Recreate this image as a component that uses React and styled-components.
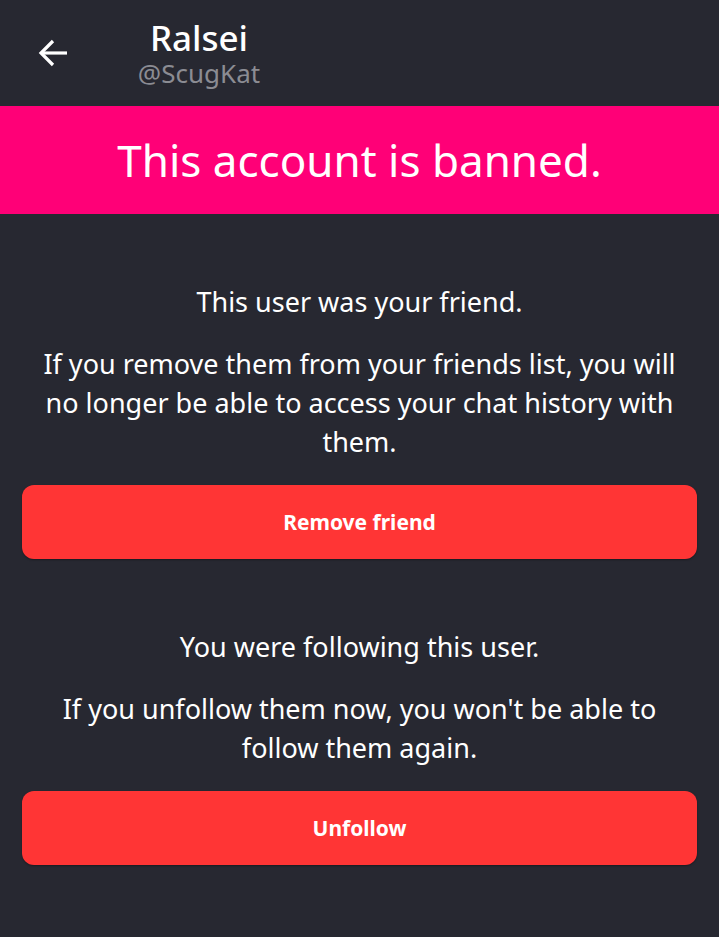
import React from "react";
import styled, { createGlobalStyle } from "styled-components";

const GlobalStyle = createGlobalStyle`
  html, body {
    margin: 0;
    padding: 0;
    background: #272831;
  }
  body {
    font-family: "Noto Sans", "Open Sans", sans-serif;
    color: #ffffff;
  }
`;

const Page = styled.div`
  min-height: 937px;
  background: #272831;
`;

const Header = styled.header`
  height: 106px;
  display: flex;
  align-items: flex-start;
  padding: 21px 0 0 36px;
  box-sizing: border-box;
`;

const BackButton = styled.button`
  background: none;
  border: none;
  padding: 0;
  margin-top: 15px;
  width: 34px;
  height: 34px;
  display: flex;
  align-items: center;
  justify-content: center;
  color: #ffffff;
`;

const Titles = styled.div`
  width: 130px;
  margin-left: 64px;
  display: flex;
  flex-direction: column;
  align-items: center;
`;

const Name = styled.h1`
  margin: 0;
  font-size: 35px;
  font-weight: 500;
  line-height: 34px;
`;

const Handle = styled.span`
  margin-top: 4px;
  font-size: 26px;
  color: #8b8c93;
  line-height: 28px;
`;

const Banner = styled.div`
  height: 108px;
  background: #ff0077;
  display: flex;
  align-items: center;
  justify-content: center;
  font-size: 44px;
  font-weight: 400;
`;

const Content = styled.main`
  padding: 68px 22px 0;
  display: flex;
  flex-direction: column;
`;

const Section = styled.section`
  display: flex;
  flex-direction: column;
  margin-bottom: ${(p) => p.$gap || 0}px;
`;

const Lead = styled.p`
  margin: 0 0 23px;
  text-align: center;
  font-size: 27px;
  line-height: 39px;
`;

const Body = styled.p`
  margin: 0 0 24px;
  padding: 0 16px;
  text-align: center;
  font-size: 27px;
  line-height: 39px;
`;

const DangerButton = styled.button`
  height: 74px;
  border: none;
  border-radius: 12px;
  background: #ff3535;
  color: #ffffff;
  font-family: "Noto Sans", "Open Sans", sans-serif;
  font-size: 21px;
  font-weight: 700;
  box-shadow: 0 1px 2px rgba(0, 0, 0, 0.35);
`;

function ArrowLeft() {
  return (
    <svg width="32" height="30" viewBox="0 0 32 30" fill="none" stroke="currentColor" strokeWidth="3.2" strokeLinecap="butt">
      <path d="M30 15H4" />
      <path d="M16 3L4 15l12 12" />
    </svg>
  );
}

export default function App() {
  return (
    <>
      <GlobalStyle />
      <Page>
        <Header>
          <BackButton aria-label="Back">
            <ArrowLeft />
          </BackButton>
          <Titles>
            <Name>Ralsei</Name>
            <Handle>@ScugKat</Handle>
          </Titles>
        </Header>
        <Banner>This account is banned.</Banner>
        <Content>
          <Section $gap={68}>
            <Lead>This user was your friend.</Lead>
            <Body>
              If you remove them from your friends list, you will no longer be able to access your chat history with them.
            </Body>
            <DangerButton>Remove friend</DangerButton>
          </Section>
          <Section>
            <Lead>You were following this user.</Lead>
            <Body>If you unfollow them now, you won't be able to follow them again.</Body>
            <DangerButton>Unfollow</DangerButton>
          </Section>
        </Content>
      </Page>
    </>
  );
}
